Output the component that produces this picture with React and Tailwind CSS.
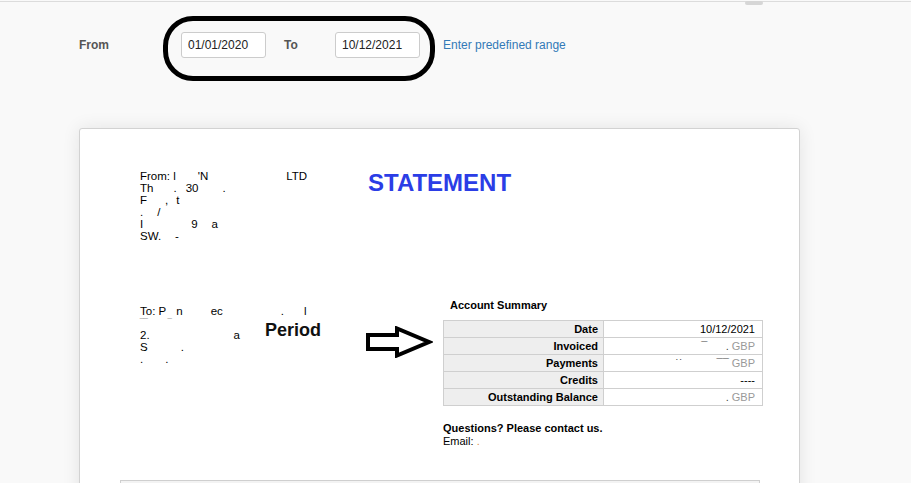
import React from 'react';

const rows = [
  { label: 'Date', value: '10/12/2021', dark: true },
  { label: 'Invoiced', pre: '\u00AF\u00A0\u00A0\u00A0\u00A0\u00A0\u00A0.', value: 'GBP' },
  { label: 'Payments', pre: '\u02D9\u02D9\u00A0\u00A0\u00A0\u00A0\u00A0\u00A0\u00A0\u00A0\u00A0\u00A0\u00A0\u00AF\u00AF', value: 'GBP' },
  { label: 'Credits', value: '----', dark: true },
  { label: 'Outstanding Balance', pre: '.', value: 'GBP' },
];

function OutlineArrow() {
  return (
    <svg width="68" height="32" viewBox="0 0 68 32" fill="none">
      <path d="M3 9 H32 V2.5 L64 16 L32 29.5 V23 H3 Z" stroke="#000" strokeWidth="4" strokeLinejoin="miter" />
    </svg>
  );
}

export default function App() {
  return (
    <div className="relative h-[483px] overflow-hidden bg-[#f9f9f9] font-['Liberation_Sans',Arial,sans-serif]">
      {/* top line */}
      <div className="pt-px">
        <div className="border-t border-[#dcdcdc]" />
      </div>
      <span className="absolute left-[745px] top-[1px] h-[4px] w-[18px] rounded-full bg-[#d6d6d6]" />

      {/* date filter */}
      <div className="relative">
        <div className="flex h-[26px] items-center pl-[79px] mt-[30px] text-[12px]">
          <span className="w-[102px] font-bold text-[#555]">From</span>
          <div className="flex h-[26px] w-[85px] items-center rounded-[3px] border border-[#ccc] bg-white pl-[6px] text-[#222]">01/01/2020</div>
          <span className="ml-[18px] w-[51px] font-bold text-[#555]">To</span>
          <div className="flex h-[26px] w-[85px] items-center rounded-[3px] border border-[#ccc] bg-white pl-[6px] text-[#222]">10/12/2021</div>
          <span className="ml-[23px] text-[#337ab7]">Enter predefined range</span>
        </div>
        <div className="absolute left-[163px] top-[-16px] h-[65px] w-[272px] rounded-[30px] border-[5px] border-black" />
      </div>

      {/* statement card */}
      <div className="ml-[79px] mt-[70px] h-[400px] w-[721px] rounded-t-[3px] border border-[#d2d2d2] bg-white shadow-[0_0_18px_rgba(0,0,0,0.09)]">
        <div className="flex pl-[60px] pt-[41px]">
          <div className="w-[228px] text-[11.5px] leading-[12px] text-black">
            <div className="flex">
              <span>From: l</span><span className="ml-[22px]">&#39;N</span><span className="ml-[78px]">LTD</span>
            </div>
            <div className="flex"><span>Th</span><span className="ml-[20px]">.</span><span className="ml-[9px]">30</span><span className="ml-[24px]">.</span></div>
            <div className="flex"><span>F</span><span className="ml-[18px]">,</span><span className="ml-[8px]">t</span></div>
            <div className="flex"><span>.</span><span className="ml-[14px]">/</span></div>
            <div className="flex"><span>I</span><span className="ml-[48px]">9</span><span className="ml-[14px]">a</span></div>
            <div className="flex"><span>SW.</span><span className="ml-[14px]">-</span></div>
          </div>
          <div className="mt-[1px] text-[24px] font-bold leading-[24px] text-[#2b3de6]">STATEMENT</div>
        </div>

        <div className="mt-[56px] flex pl-[60px]">
          <div className="w-[125px] pt-[7px] text-[11.5px] leading-[12px] text-black">
            <div className="flex whitespace-nowrap"><span>To: P</span><span className="ml-[10px]">n</span><span className="ml-[28px]">ec</span><span className="ml-[58px]">.</span><span className="ml-[20px]">l</span></div>
            <div className="flex text-[#aaa]"><span>&#8254;&#8254;</span><span className="ml-[20px]">&#8254;</span></div>
            <div className="flex"><span>2.</span><span className="ml-[84px]">a</span></div>
            <div className="flex"><span>S</span><span className="ml-[33px]">.</span></div>
            <div className="flex"><span>.</span><span className="ml-[22px]">.</span></div>
          </div>
          <div className="mt-[21px] w-[100px] text-[18px] font-bold leading-[22px] text-[#111]">Period</div>
          <div className="mt-[28px] w-[78px]"><OutlineArrow /></div>
          <div className="w-[320px]">
            <div className="pl-[7px] pt-[1px] text-[11px] font-bold leading-[13px] text-black">Account Summary</div>
            <div className="mt-[8px] border-t border-[#cfcfcf]">
              {rows.map((r) => (
                <div key={r.label} className="flex h-[17px] border-b border-x border-[#cfcfcf] text-[11px] leading-[16px]">
                  <div className="w-[160px] border-r border-[#cfcfcf] bg-[#eee] pr-[5px] text-right font-bold text-black">{r.label}</div>
                  <div className={`flex-1 pr-[7px] text-right ${r.dark ? 'text-black' : 'text-[#999]'}`}>
                    {r.pre && <span className="text-[#444]">{r.pre} </span>}
                    {r.value}
                  </div>
                </div>
              ))}
            </div>
            <div className="mt-[15px] text-[11px] font-bold leading-[14px] text-black">Questions? Please contact us.</div>
            <div className="text-[11px] leading-[13px] text-black">Email: <span className="text-[#e08a3c]">.</span></div>
          </div>
        </div>

        <div className="ml-[40px] mt-[32px] h-[40px] w-[640px] border border-[#cfcfcf] bg-[#f3f3f3]" />
      </div>
    </div>
  );
}
